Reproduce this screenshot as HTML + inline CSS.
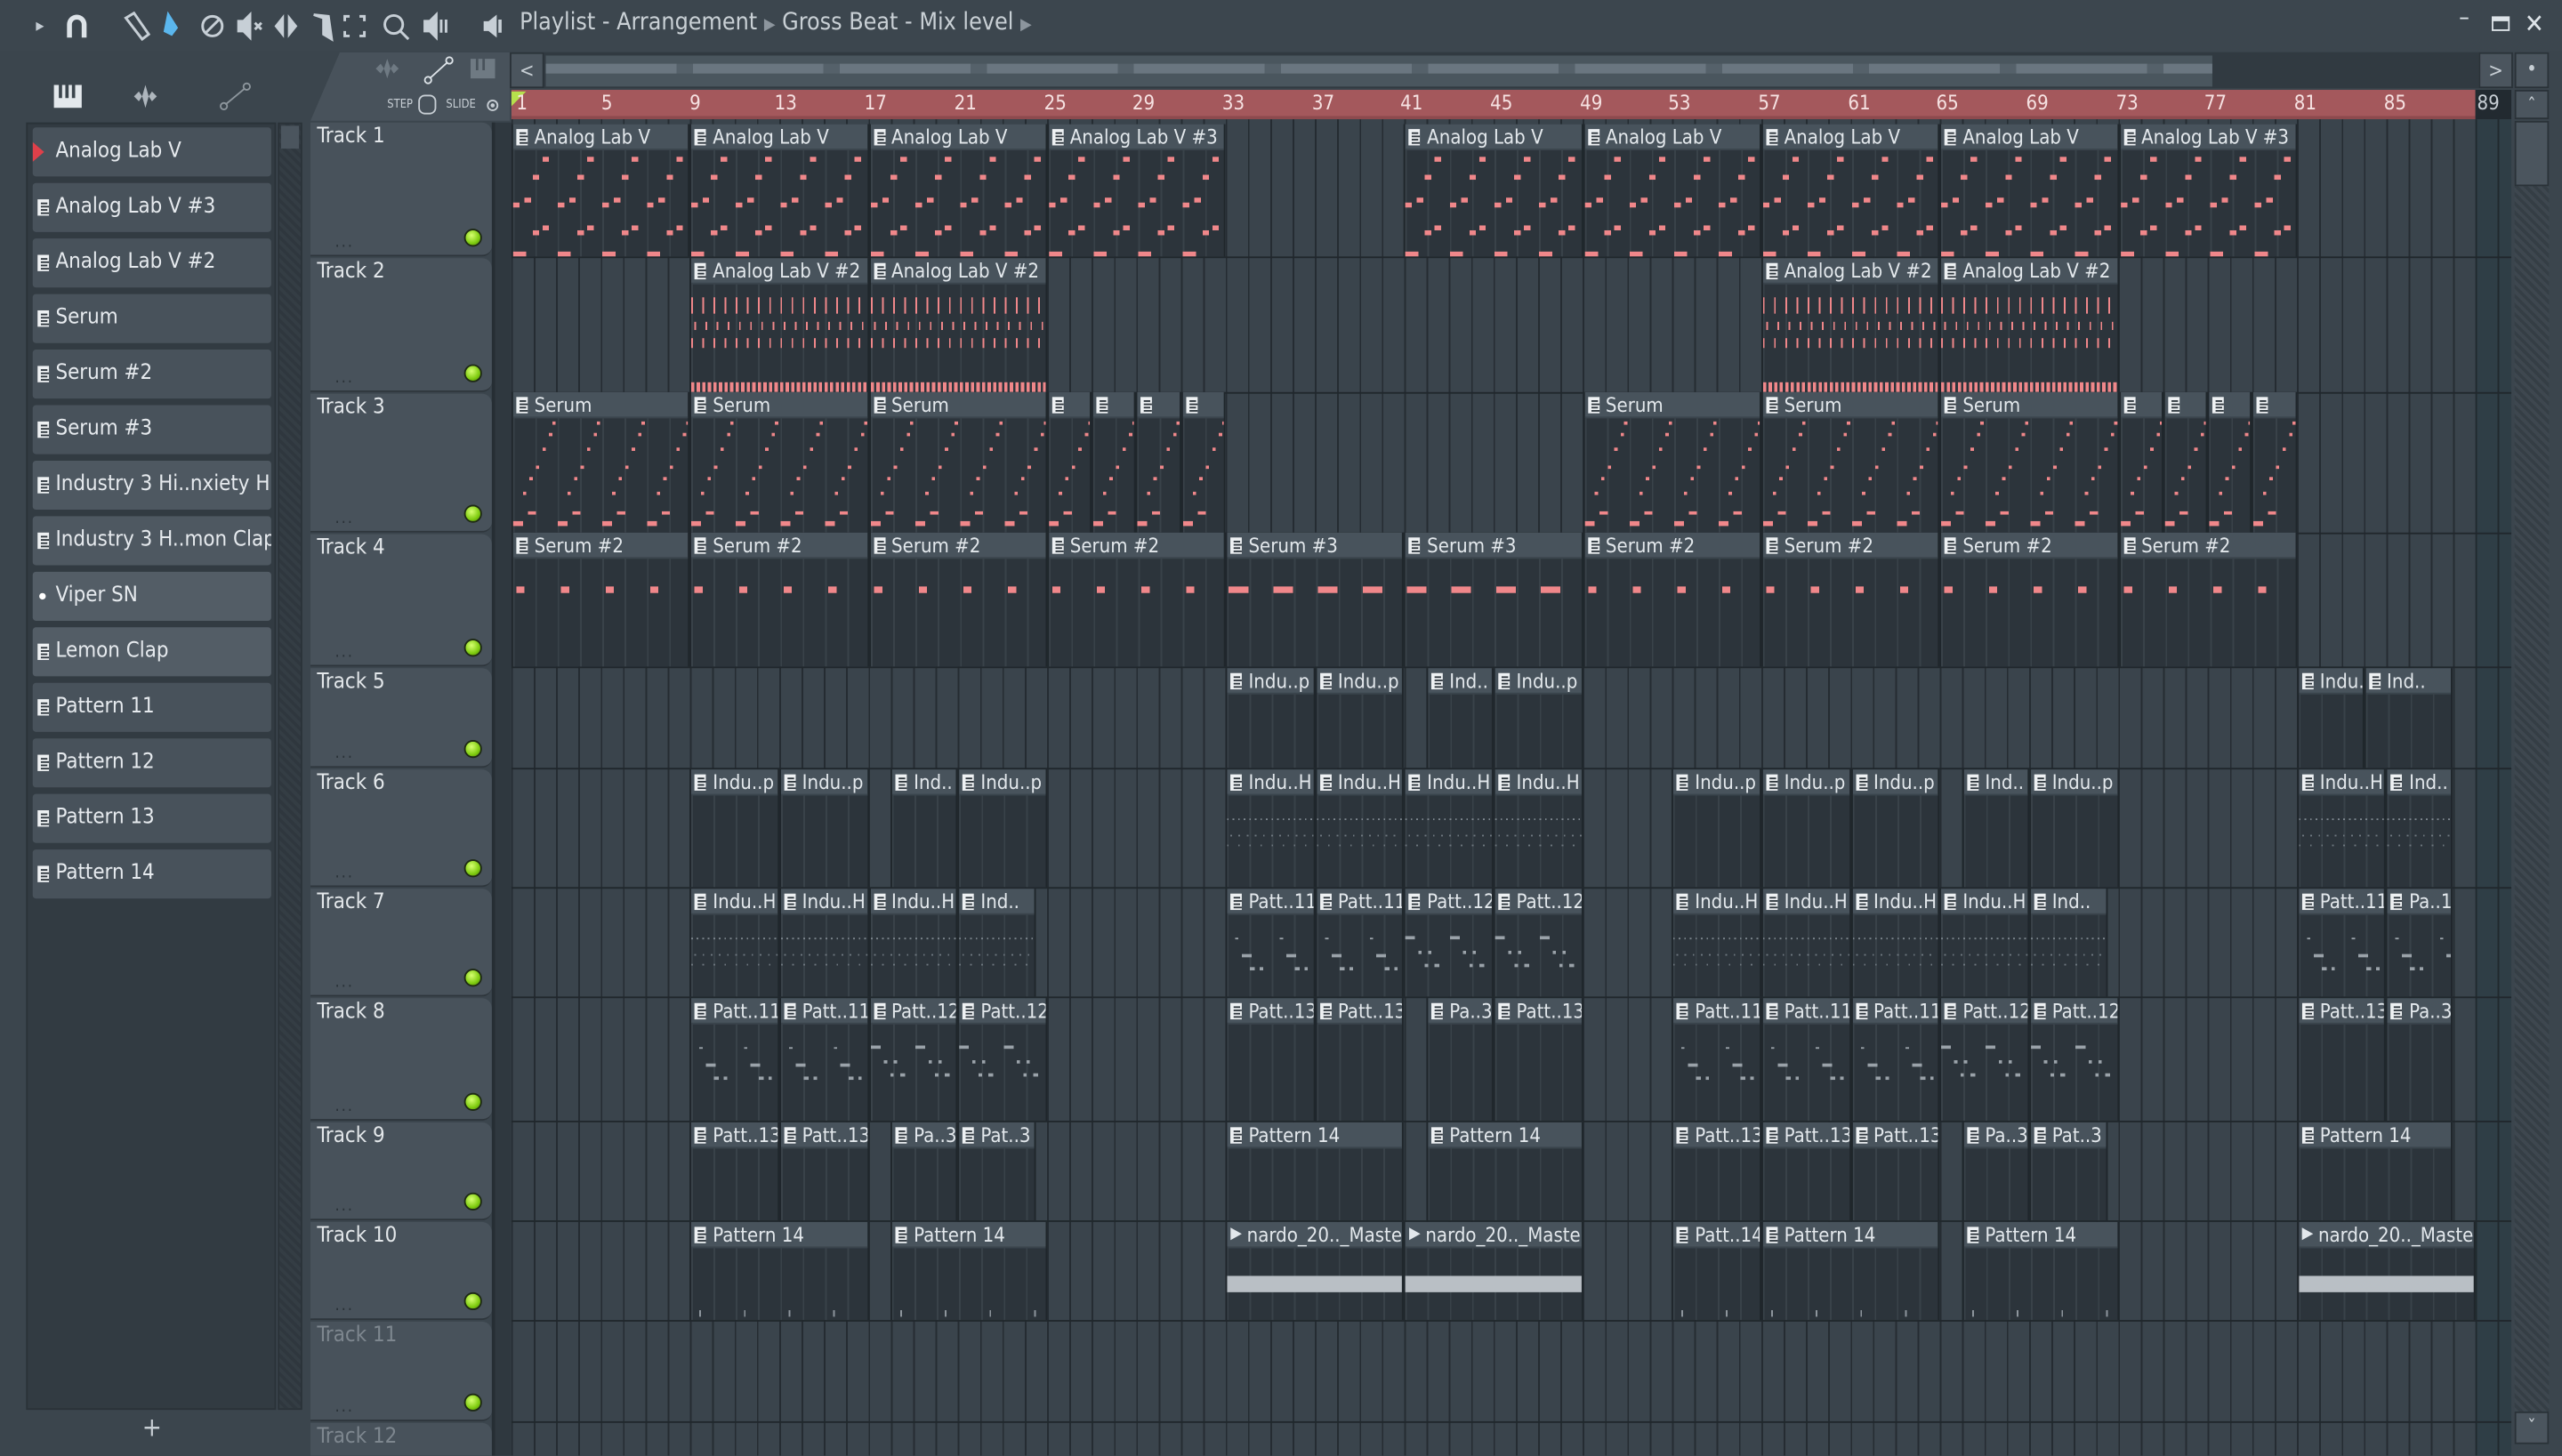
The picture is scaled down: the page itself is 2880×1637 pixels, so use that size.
<!DOCTYPE html>
<html><head><meta charset="utf-8">
<style>
*{margin:0;padding:0;box-sizing:border-box}
html,body{width:2880px;height:1636px;overflow:hidden;background:#3b454d}
#s{position:absolute;left:0;top:0;width:1568px;height:891px;transform:scale(1.83673);transform-origin:0 0;background:#3b454d;font-family:"DejaVu Sans Condensed","DejaVu Sans","Liberation Sans Narrow",sans-serif;font-stretch:condensed;color:#dde3e8;overflow:hidden}
.a{position:absolute}
.top{left:0;top:0;width:1568px;height:31px;background:#3c464e}
.title{left:318px;top:6px;font-size:14.5px;color:#c9d0d5;white-space:nowrap}
.panel{left:16px;top:75px;width:153px;height:788px;background:#323b42;border:1px solid #2a3238}
.item{position:absolute;left:3px;width:146px;height:30px;background:#48525b;border-radius:2px;font-size:13px;line-height:30px;padding-left:14px;white-space:nowrap;overflow:hidden;color:#e6eaee}
.item i,.clip .h i{position:absolute;left:3px;top:10px;width:7px;height:10px;background:linear-gradient(#2d353c 0 0) 2px 2px/4px 1px no-repeat,linear-gradient(#2d353c 0 0) 2px 4px/5px 1px no-repeat,linear-gradient(#2d353c 0 0) 2px 6px/4px 1px no-repeat,linear-gradient(#2d353c 0 0) 2px 8px/5px 1px no-repeat,#eef1f3}
.sb{left:170px;top:75px;width:15px;height:788px;background:repeating-linear-gradient(45deg,#343d44 0 2px,#2f373e 2px 4px);border:1px solid #2a3238}
.hdr{position:absolute;left:190px;width:111px;background:#48525b;border-radius:0 6px 6px 0;border-bottom:1px solid #2e363c}
.hdr b{position:absolute;left:4px;top:1px;font-weight:normal;font-size:13px;color:#e3e7ea}
.hdr .led{position:absolute;right:6px;bottom:5px;width:11px;height:11px;border-radius:50%;background:radial-gradient(circle at 40% 35%,#d6ff70,#7fcc10 60%,#4c7d08);border:1px solid #1e2a14}
.hdr .dt{position:absolute;left:15px;bottom:2px;font-size:10px;color:#2a3238;letter-spacing:1px}
.grid{left:313px;top:73px;width:1202px;height:818px;background:repeating-linear-gradient(90deg,#252c32 0 1px,#3a444c 1px 13.66px)}
.grid2{left:1515px;top:73px;width:22px;height:818px;background:repeating-linear-gradient(90deg,#20292e 0 1px,#2f3e46 1px 13.66px)}
.rsep{position:absolute;left:313px;width:1224px;height:1px;background:#20272c}
.ruler{left:313px;top:55px;width:1202px;height:18px;background:#a4585c;border-bottom:2px solid #8d4a4e}
.ruler span{position:absolute;top:1px;font-size:12px;color:#f6e2e2}
.clip{position:absolute;left:calc(313px + (var(--b) - 1) * 13.66px);width:calc(var(--w) * 13.66px);background:#2c343b;border-left:1px solid #1f262b;border-right:1px solid #1f262b;overflow:hidden}
.clip .h{position:absolute;left:0;top:0;right:0;height:16px;background:#48535c;border-bottom:1px solid #3a444c;font-size:12px;line-height:16px;padding-left:13px;white-space:nowrap;overflow:hidden;color:#e3e8ec}
.clip .h i{top:3px;left:2px}
.clip .bd{position:absolute;left:0;right:0;top:16px;bottom:0;background:repeating-linear-gradient(90deg,#394249 0 1px,transparent 1px 13.66px)}
.clip .bd.p1{background:
repeating-linear-gradient(90deg,transparent 0 18px,#f0878a 18px 22px,transparent 22px 27.32px) 0 4px/100% 3px no-repeat,
repeating-linear-gradient(90deg,transparent 0 12px,#f0878a 12px 16px,transparent 16px 27.32px) 0 15px/100% 3px no-repeat,
repeating-linear-gradient(90deg,transparent 0 7px,#f0878a 7px 11px,transparent 11px 27.32px) 0 29px/100% 3px no-repeat,
repeating-linear-gradient(90deg,#f0878a 0 4px,transparent 4px 27.32px) 0 32px/100% 3px no-repeat,
repeating-linear-gradient(90deg,transparent 0 18px,#f0878a 18px 22px,transparent 22px 27.32px) 0 46px/100% 3px no-repeat,
repeating-linear-gradient(90deg,transparent 0 12px,#f0878a 12px 16px,transparent 16px 27.32px) 0 49px/100% 3px no-repeat,
repeating-linear-gradient(90deg,#f0878a 0 8px,transparent 8px 27.32px) 0 62px/100% 3px no-repeat,
repeating-linear-gradient(90deg,#394249 0 1px,transparent 1px 13.66px)}
.clip .bd.p2{background:
repeating-linear-gradient(90deg,#f0878a 0 1px,transparent 1px 6.83px) 0 8px/100% 10px no-repeat,
repeating-linear-gradient(90deg,transparent 0 2px,#f0878a 2px 3px,transparent 3px 6.83px) 0 23px/100% 5px no-repeat,
repeating-linear-gradient(90deg,#f0878a 0 1px,transparent 1px 6.83px) 0 33px/100% 6px no-repeat,
repeating-linear-gradient(90deg,#f0878a 0 2px,transparent 2px 3.4px) 0 60px/100% 6px no-repeat,
repeating-linear-gradient(90deg,#394249 0 1px,transparent 1px 13.66px)}
.clip .bd.p3{background:
repeating-linear-gradient(90deg,transparent 0 24px,#f0878a 24px 26px,transparent 26px 27.32px) 0 2px/100% 2px no-repeat,
repeating-linear-gradient(90deg,transparent 0 22px,#f0878a 22px 24px,transparent 24px 27.32px) 0 9px/100% 2px no-repeat,
repeating-linear-gradient(90deg,transparent 0 18px,#f0878a 18px 20px,transparent 20px 27.32px) 0 18px/100% 2px no-repeat,
repeating-linear-gradient(90deg,transparent 0 14px,#f0878a 14px 16px,transparent 16px 27.32px) 0 29px/100% 2px no-repeat,
repeating-linear-gradient(90deg,transparent 0 10px,#f0878a 10px 12px,transparent 12px 27.32px) 0 36px/100% 2px no-repeat,
repeating-linear-gradient(90deg,transparent 0 6px,#f0878a 6px 8px,transparent 8px 27.32px) 0 45px/100% 2px no-repeat,
repeating-linear-gradient(90deg,transparent 0 9px,#f0878a 9px 14px,transparent 14px 27.32px) 0 57px/100% 2px no-repeat,
repeating-linear-gradient(90deg,#f0878a 0 6px,transparent 6px 27.32px) 0 63px/100% 3px no-repeat,
repeating-linear-gradient(90deg,#394249 0 1px,transparent 1px 13.66px)}
.clip .bd.p4{background:repeating-linear-gradient(90deg,transparent 0 2px,#f0878a 2px 7px,transparent 7px 27.32px) 0 17px/100% 4px no-repeat,repeating-linear-gradient(90deg,#394249 0 1px,transparent 1px 13.66px)}
.clip .bd.p4b{background:repeating-linear-gradient(90deg,transparent 0 1px,#f0878a 1px 13px,transparent 13px 27.32px) 0 17px/100% 4px no-repeat,repeating-linear-gradient(90deg,#394249 0 1px,transparent 1px 13.66px)}
.clip .bd.g1{background:
repeating-linear-gradient(90deg,#7d868e 0 1px,transparent 1px 3.4px) 0 14px/100% 1px no-repeat,
repeating-linear-gradient(90deg,transparent 0 2px,#6e777f 2px 3px,transparent 3px 5px) 0 24px/100% 1px no-repeat,
repeating-linear-gradient(90deg,#6e777f 0 1px,transparent 1px 6.8px) 0 30px/100% 1px no-repeat,
repeating-linear-gradient(90deg,#394249 0 1px,transparent 1px 13.66px)}
.clip .bd.g2{background:
repeating-linear-gradient(90deg,transparent 0 5px,#9aa2a9 5px 7px,transparent 7px 27.32px) 0 14px/100% 1px no-repeat,
repeating-linear-gradient(90deg,transparent 0 9px,#9aa2a9 9px 15px,transparent 15px 27.32px) 0 24px/100% 2px no-repeat,
repeating-linear-gradient(90deg,transparent 0 14px,#9aa2a9 14px 17px,transparent 17px 20px,#9aa2a9 20px 22px,transparent 22px 27.32px) 0 32px/100% 2px no-repeat,
repeating-linear-gradient(90deg,#394249 0 1px,transparent 1px 13.66px)}
.clip .bd.g3{background:
repeating-linear-gradient(90deg,#9aa2a9 0 6px,transparent 6px 27.32px) 0 13px/100% 2px no-repeat,
repeating-linear-gradient(90deg,transparent 0 8px,#9aa2a9 8px 10px,transparent 10px 14px,#9aa2a9 14px 16px,transparent 16px 27.32px) 0 22px/100% 2px no-repeat,
repeating-linear-gradient(90deg,transparent 0 12px,#9aa2a9 12px 14px,transparent 14px 18px,#9aa2a9 18px 21px,transparent 21px 27.32px) 0 30px/100% 2px no-repeat,
repeating-linear-gradient(90deg,#394249 0 1px,transparent 1px 13.66px)}
.clip .bd.g4{background:repeating-linear-gradient(90deg,transparent 0 5px,#8d959c 5px 6px,transparent 6px 27.32px) 0 38px/100% 4px no-repeat,repeating-linear-gradient(90deg,#394249 0 1px,transparent 1px 13.66px)}
.clip .bd.wav{background:linear-gradient(#b9bfc5,#b9bfc5) 0 17px/100% 10px no-repeat,repeating-linear-gradient(90deg,#394249 0 1px,transparent 1px 13.66px)}
.btn{position:absolute;background:#4b555e;border:1px solid #2a3238;color:#c7ced4;font-size:12px;text-align:center}
</style></head><body><div id="s">
<div class="a top"></div>
<div class="a" style="left:22px;top:9px;font-size:11px;color:#c3cbd2">&#9656;</div>
<svg class="a" style="left:38px;top:7px" width="18" height="17" viewBox="0 0 18 17"><path d="M3 16V8a6 6 0 0 1 12 0v8h-3V8a3 3 0 0 0-6 0v8z" fill="#dde3e8"/></svg>
<svg class="a" style="left:74px;top:6px" width="210" height="20" viewBox="0 0 210 20" fill="none" stroke="#c7cfd6" stroke-width="1.6">
<path d="M3 5l5-3 9 13-4 3z"/><path d="M29 3l5 8-3 4-4-2z" stroke="#5bb7ee" fill="#5bb7ee"/><circle cx="56" cy="10" r="6"/><path d="M52 14l8-8"/>
<path d="M72 7h3l4-4v14l-4-4h-3z" fill="#c7cfd6"/><path d="M82 8l4 4m0-4l-4 4"/><path d="M95 10l4-5v10zm12 0l-4-5v10z" fill="#c7cfd6"/>
<path d="M118 3l6 2v10l5 3-2-14z" fill="#c7cfd6"/><path d="M140 4h-3v3m0 6v3h3m6 0h3v-3m0-6V4h-3"/><circle cx="167" cy="9" r="5.5"/><path d="M171 13l5 5"/>
<path d="M186 7h3l4-4v14l-4-4h-3z" fill="#c7cfd6"/><path d="M196 6v8m3-8v8"/></svg>
<svg class="a" style="left:294px;top:7px" width="18" height="18" viewBox="0 0 18 18"><path d="M2 6h3l5-4v14l-5-4H2z" fill="#c7cfd6"/><path d="M12 5v8" stroke="#c7cfd6" stroke-width="2"/></svg>
<div class="a title">Playlist - Arrangement <span style="color:#8c959d;font-size:10px">&#9654;</span> Gross Beat - Mix level <span style="color:#8c959d;font-size:10px">&#9654;</span></div>
<div class="a" style="left:1505px;top:3px;font-size:14px;color:#dde3e8">&#8211;</div>
<div class="a" style="left:1525px;top:10px;width:11px;height:9px;border:1.5px solid #dde3e8;border-top-width:3px"></div>
<div class="a" style="left:1545px;top:5px;font-size:16px;color:#dde3e8">&#10005;</div>

<svg class="a" style="left:30px;top:49px" width="140" height="20" viewBox="0 0 140 20"><rect x="3" y="3" width="17" height="14" fill="#e3e8ec"/><path d="M7 3v8m4-8v8m4-8v8" stroke="#3b454d" stroke-width="2"/><path d="M52 10l3-3 2 3 2-7 2 7 2-3 3 3-3 3-2-3-2 7-2-7-2 3z" fill="#aeb6bd"/><circle cx="107" cy="16" r="2" fill="none" stroke="#8d969d"/><circle cx="121" cy="4" r="2" fill="none" stroke="#8d969d"/><path d="M108 15l12-10" stroke="#8d969d"/></svg>
<div class="a panel">
<div class="item" style="top:2px"><span style="position:absolute;left:0;top:9px;border-left:7px solid #e0404a;border-top:6px solid transparent;border-bottom:6px solid transparent"></span>Analog Lab V</div>
<div class="item" style="top:36px"><i></i>Analog Lab V #3</div>
<div class="item" style="top:70px"><i></i>Analog Lab V #2</div>
<div class="item" style="top:104px"><i></i>Serum</div>
<div class="item" style="top:138px"><i></i>Serum #2</div>
<div class="item" style="top:172px"><i></i>Serum #3</div>
<div class="item" style="top:206px;background:#4e5861"><i></i>Industry 3 Hi..nxiety HH</div>
<div class="item" style="top:240px;background:#4e5861"><i></i>Industry 3 H..mon Clap</div>
<div class="item" style="top:274px;background:#535d66"><span style="position:absolute;left:4px;top:13px;width:4px;height:4px;border-radius:50%;background:#fff"></span>Viper SN</div>
<div class="item" style="top:308px;background:#535d66"><i></i>Lemon Clap</div>
<div class="item" style="top:342px"><i></i>Pattern 11</div>
<div class="item" style="top:376px"><i></i>Pattern 12</div>
<div class="item" style="top:410px"><i></i>Pattern 13</div>
<div class="item" style="top:444px"><i></i>Pattern 14</div>
</div>
<div class="a sb"><div style="position:absolute;left:1px;top:1px;width:11px;height:14px;background:#4b555e"></div></div>
<div class="a" style="left:87px;top:864px;font-size:16px;color:#c7ced4">+</div>

<div class="a" style="left:190px;top:32px;width:122px;height:42px;background:#48525b;clip-path:polygon(18px 0,100% 0,100% 100%,0 100%)"></div>
<svg class="a" style="left:228px;top:34px" width="80" height="18" viewBox="0 0 80 18"><path d="M2 8l3-3 2 3 2-6 2 6 2-3 3 3-3 3-2-3-2 6-2-6-2 3z" fill="#6f7a83"/><circle cx="34" cy="15" r="2" fill="none" stroke="#dde3e8"/><circle cx="47" cy="3" r="2" fill="none" stroke="#dde3e8"/><path d="M35 14l11-10" stroke="#dde3e8"/><rect x="60" y="2" width="15" height="12" fill="#6f7a83"/><path d="M64 2v7m4-7v7" stroke="#48525b" stroke-width="1.5"/></svg>
<div class="a" style="left:237px;top:60px;font-size:7px;color:#c7ced4">STEP</div>
<div class="a" style="left:256px;top:58px;width:11px;height:12px;border:1px solid #c7ced4;border-radius:4px"></div>
<div class="a" style="left:273px;top:60px;font-size:7px;color:#c7ced4">SLIDE</div>
<div class="a" style="left:298px;top:61px;width:7px;height:7px;border-radius:50%;border:1px solid #c7ced4;background:radial-gradient(#c7ced4 30%,transparent 40%)"></div>
<div class="btn" style="left:312px;top:32px;width:21px;height:22px;line-height:20px">&lt;</div>
<div class="a" style="left:333px;top:32px;width:1184px;height:22px;background:#313a41"></div>
<div class="a" style="left:334px;top:34px;width:1020px;height:19px;background:#4a565e"></div>
<div class="a" style="left:334px;top:39px;width:1020px;height:6px;background:repeating-linear-gradient(90deg,#6a7680 0 80px,#55616a 80px 90px)"></div>
<div class="btn" style="left:1517px;top:32px;width:21px;height:22px;line-height:20px">&gt;</div>
<div class="btn" style="left:1539px;top:32px;width:21px;height:22px;line-height:18px">&#8226;</div>

<div class="a ruler">
<div class="a" style="left:0;top:1px;border-left:9px solid #b6e04c;border-bottom:9px solid transparent"></div>
<span style="left:3px">1</span><span style="left:55px">5</span><span style="left:109px">9</span><span style="left:161px">13</span><span style="left:216px">17</span><span style="left:271px">21</span><span style="left:326px">25</span><span style="left:380px">29</span><span style="left:435px">33</span><span style="left:490px">37</span><span style="left:544px">41</span><span style="left:599px">45</span><span style="left:654px">49</span><span style="left:708px">53</span><span style="left:763px">57</span><span style="left:818px">61</span><span style="left:872px">65</span><span style="left:927px">69</span><span style="left:982px">73</span><span style="left:1036px">77</span><span style="left:1091px">81</span><span style="left:1146px">85</span></div>
<div class="a" style="left:1515px;top:55px;width:22px;height:18px;background:#222a30;font-size:12px;color:#c7ced4;padding:1px 0 0 1px">89</div>
<div class="btn" style="left:1539px;top:55px;width:21px;height:18px;line-height:18px">&#710;</div>
<div class="a" style="left:1539px;top:74px;width:21px;height:40px;background:#4b555e;border:1px solid #2a3238"></div>
<div class="a" style="left:1539px;top:114px;width:21px;height:750px;background:repeating-linear-gradient(45deg,#3e474f 0 2px,#353e45 2px 4px)"></div>
<div class="btn" style="left:1539px;top:864px;width:21px;height:20px;line-height:18px">&#711;</div>

<div class="a" style="left:301px;top:75px;width:12px;height:816px;background:#2f383f;border-left:2px solid #262e34"></div>
<div class="a grid"></div><div class="a grid2"></div>
<div class="rsep" style="top:157px"></div><div class="rsep" style="top:240px"></div><div class="rsep" style="top:326px"></div><div class="rsep" style="top:408px"></div><div class="rsep" style="top:470px"></div><div class="rsep" style="top:543px"></div><div class="rsep" style="top:610px"></div><div class="rsep" style="top:686px"></div><div class="rsep" style="top:747px"></div><div class="rsep" style="top:808px"></div><div class="rsep" style="top:870px"></div>

<div class="hdr" style="top:75px;height:82px"><b>Track 1</b><span class="dt">...</span><span class="led"></span></div>
<div class="hdr" style="top:158px;height:82px"><b>Track 2</b><span class="dt">...</span><span class="led"></span></div>
<div class="hdr" style="top:241px;height:85px"><b>Track 3</b><span class="dt">...</span><span class="led"></span></div>
<div class="hdr" style="top:327px;height:81px"><b>Track 4</b><span class="dt">...</span><span class="led"></span></div>
<div class="hdr" style="top:409px;height:61px"><b>Track 5</b><span class="dt">...</span><span class="led"></span></div>
<div class="hdr" style="top:471px;height:72px"><b>Track 6</b><span class="dt">...</span><span class="led"></span></div>
<div class="hdr" style="top:544px;height:66px"><b>Track 7</b><span class="dt">...</span><span class="led"></span></div>
<div class="hdr" style="top:611px;height:75px"><b>Track 8</b><span class="dt">...</span><span class="led"></span></div>
<div class="hdr" style="top:687px;height:60px"><b>Track 9</b><span class="dt">...</span><span class="led"></span></div>
<div class="hdr" style="top:748px;height:60px"><b>Track 10</b><span class="dt">...</span><span class="led"></span></div>
<div class="hdr" style="top:809px;height:61px"><b style="color:#7e878f">Track 11</b><span class="dt">...</span><span class="led"></span></div>
<div class="hdr" style="top:871px;height:30px"><b style="color:#7e878f">Track 12</b></div>

<!-- Track 1 -->
<div class="a" style="left:0;top:76px;width:1568px;height:81px">
<div class="clip" style="--b:1;--w:8;height:81px"><div class="h"><i></i>Analog Lab V</div><div class="bd p1"></div></div>
<div class="clip" style="--b:9;--w:8;height:81px"><div class="h"><i></i>Analog Lab V</div><div class="bd p1"></div></div>
<div class="clip" style="--b:17;--w:8;height:81px"><div class="h"><i></i>Analog Lab V</div><div class="bd p1"></div></div>
<div class="clip" style="--b:25;--w:8;height:81px"><div class="h"><i></i>Analog Lab V #3</div><div class="bd p1"></div></div>
<div class="clip" style="--b:41;--w:8;height:81px"><div class="h"><i></i>Analog Lab V</div><div class="bd p1"></div></div>
<div class="clip" style="--b:49;--w:8;height:81px"><div class="h"><i></i>Analog Lab V</div><div class="bd p1"></div></div>
<div class="clip" style="--b:57;--w:8;height:81px"><div class="h"><i></i>Analog Lab V</div><div class="bd p1"></div></div>
<div class="clip" style="--b:65;--w:8;height:81px"><div class="h"><i></i>Analog Lab V</div><div class="bd p1"></div></div>
<div class="clip" style="--b:73;--w:8;height:81px"><div class="h"><i></i>Analog Lab V #3</div><div class="bd p1"></div></div>
</div>
<!-- Track 2 -->
<div class="a" style="left:0;top:158px;width:1568px;height:82px">
<div class="clip" style="--b:9;--w:8;height:82px"><div class="h"><i></i>Analog Lab V #2</div><div class="bd p2"></div></div>
<div class="clip" style="--b:17;--w:8;height:82px"><div class="h"><i></i>Analog Lab V #2</div><div class="bd p2"></div></div>
<div class="clip" style="--b:57;--w:8;height:82px"><div class="h"><i></i>Analog Lab V #2</div><div class="bd p2"></div></div>
<div class="clip" style="--b:65;--w:8;height:82px"><div class="h"><i></i>Analog Lab V #2</div><div class="bd p2"></div></div>
</div>
<!-- Track 3 -->
<div class="a" style="left:0;top:240px;width:1568px;height:86px">
<div class="clip" style="--b:1;--w:8;height:86px"><div class="h"><i></i>Serum</div><div class="bd p3"></div></div>
<div class="clip" style="--b:9;--w:8;height:86px"><div class="h"><i></i>Serum</div><div class="bd p3"></div></div>
<div class="clip" style="--b:17;--w:8;height:86px"><div class="h"><i></i>Serum</div><div class="bd p3"></div></div>
<div class="clip" style="--b:25;--w:2;height:86px"><div class="h"><i></i></div><div class="bd p3"></div></div>
<div class="clip" style="--b:27;--w:2;height:86px"><div class="h"><i></i></div><div class="bd p3"></div></div>
<div class="clip" style="--b:29;--w:2;height:86px"><div class="h"><i></i></div><div class="bd p3"></div></div>
<div class="clip" style="--b:31;--w:2;height:86px"><div class="h"><i></i></div><div class="bd p3"></div></div>
<div class="clip" style="--b:49;--w:8;height:86px"><div class="h"><i></i>Serum</div><div class="bd p3"></div></div>
<div class="clip" style="--b:57;--w:8;height:86px"><div class="h"><i></i>Serum</div><div class="bd p3"></div></div>
<div class="clip" style="--b:65;--w:8;height:86px"><div class="h"><i></i>Serum</div><div class="bd p3"></div></div>
<div class="clip" style="--b:73;--w:2;height:86px"><div class="h"><i></i></div><div class="bd p3"></div></div>
<div class="clip" style="--b:75;--w:2;height:86px"><div class="h"><i></i></div><div class="bd p3"></div></div>
<div class="clip" style="--b:77;--w:2;height:86px"><div class="h"><i></i></div><div class="bd p3"></div></div>
<div class="clip" style="--b:79;--w:2;height:86px"><div class="h"><i></i></div><div class="bd p3"></div></div>
</div>
<!-- Track 4 -->
<div class="a" style="left:0;top:326px;width:1568px;height:82px">
<div class="clip" style="--b:1;--w:8;height:82px"><div class="h"><i></i>Serum #2</div><div class="bd p4"></div></div>
<div class="clip" style="--b:9;--w:8;height:82px"><div class="h"><i></i>Serum #2</div><div class="bd p4"></div></div>
<div class="clip" style="--b:17;--w:8;height:82px"><div class="h"><i></i>Serum #2</div><div class="bd p4"></div></div>
<div class="clip" style="--b:25;--w:8;height:82px"><div class="h"><i></i>Serum #2</div><div class="bd p4"></div></div>
<div class="clip" style="--b:33;--w:8;height:82px"><div class="h"><i></i>Serum #3</div><div class="bd p4b"></div></div>
<div class="clip" style="--b:41;--w:8;height:82px"><div class="h"><i></i>Serum #3</div><div class="bd p4b"></div></div>
<div class="clip" style="--b:49;--w:8;height:82px"><div class="h"><i></i>Serum #2</div><div class="bd p4"></div></div>
<div class="clip" style="--b:57;--w:8;height:82px"><div class="h"><i></i>Serum #2</div><div class="bd p4"></div></div>
<div class="clip" style="--b:65;--w:8;height:82px"><div class="h"><i></i>Serum #2</div><div class="bd p4"></div></div>
<div class="clip" style="--b:73;--w:8;height:82px"><div class="h"><i></i>Serum #2</div><div class="bd p4"></div></div>
</div>
<!-- Track 5 -->
<div class="a" style="left:0;top:409px;width:1568px;height:61px">
<div class="clip" style="--b:33;--w:4;height:61px"><div class="h"><i></i>Indu..p</div><div class="bd"></div></div>
<div class="clip" style="--b:37;--w:4;height:61px"><div class="h"><i></i>Indu..p</div><div class="bd"></div></div>
<div class="clip" style="--b:42;--w:3;height:61px"><div class="h"><i></i>Ind..</div><div class="bd"></div></div>
<div class="clip" style="--b:45;--w:4;height:61px"><div class="h"><i></i>Indu..p</div><div class="bd"></div></div>
<div class="clip" style="--b:81;--w:3;height:61px"><div class="h"><i></i>Indu..p</div><div class="bd"></div></div>
<div class="clip" style="--b:84;--w:4;height:61px"><div class="h"><i></i>Ind..</div><div class="bd"></div></div>
</div>
<!-- Track 6 -->
<div class="a" style="left:0;top:471px;width:1568px;height:72px">
<div class="clip" style="--b:9;--w:4;height:72px"><div class="h"><i></i>Indu..p</div><div class="bd"></div></div>
<div class="clip" style="--b:13;--w:4;height:72px"><div class="h"><i></i>Indu..p</div><div class="bd"></div></div>
<div class="clip" style="--b:18;--w:3;height:72px"><div class="h"><i></i>Ind..</div><div class="bd"></div></div>
<div class="clip" style="--b:21;--w:4;height:72px"><div class="h"><i></i>Indu..p</div><div class="bd"></div></div>
<div class="clip" style="--b:33;--w:4;height:72px"><div class="h"><i></i>Indu..H</div><div class="bd g1"></div></div>
<div class="clip" style="--b:37;--w:4;height:72px"><div class="h"><i></i>Indu..H</div><div class="bd g1"></div></div>
<div class="clip" style="--b:41;--w:4;height:72px"><div class="h"><i></i>Indu..H</div><div class="bd g1"></div></div>
<div class="clip" style="--b:45;--w:4;height:72px"><div class="h"><i></i>Indu..H</div><div class="bd g1"></div></div>
<div class="clip" style="--b:53;--w:4;height:72px"><div class="h"><i></i>Indu..p</div><div class="bd"></div></div>
<div class="clip" style="--b:57;--w:4;height:72px"><div class="h"><i></i>Indu..p</div><div class="bd"></div></div>
<div class="clip" style="--b:61;--w:4;height:72px"><div class="h"><i></i>Indu..p</div><div class="bd"></div></div>
<div class="clip" style="--b:66;--w:3;height:72px"><div class="h"><i></i>Ind..</div><div class="bd"></div></div>
<div class="clip" style="--b:69;--w:4;height:72px"><div class="h"><i></i>Indu..p</div><div class="bd"></div></div>
<div class="clip" style="--b:81;--w:4;height:72px"><div class="h"><i></i>Indu..H</div><div class="bd g1"></div></div>
<div class="clip" style="--b:85;--w:3;height:72px"><div class="h"><i></i>Ind..</div><div class="bd g1"></div></div>
</div>
<!-- Track 7 -->
<div class="a" style="left:0;top:544px;width:1568px;height:66px">
<div class="clip" style="--b:9;--w:4;height:66px"><div class="h"><i></i>Indu..H</div><div class="bd g1"></div></div>
<div class="clip" style="--b:13;--w:4;height:66px"><div class="h"><i></i>Indu..H</div><div class="bd g1"></div></div>
<div class="clip" style="--b:17;--w:4;height:66px"><div class="h"><i></i>Indu..H</div><div class="bd g1"></div></div>
<div class="clip" style="--b:21;--w:3.5;height:66px"><div class="h"><i></i>Ind..</div><div class="bd g1"></div></div>
<div class="clip" style="--b:33;--w:4;height:66px"><div class="h"><i></i>Patt..11</div><div class="bd g2"></div></div>
<div class="clip" style="--b:37;--w:4;height:66px"><div class="h"><i></i>Patt..11</div><div class="bd g2"></div></div>
<div class="clip" style="--b:41;--w:4;height:66px"><div class="h"><i></i>Patt..12</div><div class="bd g3"></div></div>
<div class="clip" style="--b:45;--w:4;height:66px"><div class="h"><i></i>Patt..12</div><div class="bd g3"></div></div>
<div class="clip" style="--b:53;--w:4;height:66px"><div class="h"><i></i>Indu..H</div><div class="bd g1"></div></div>
<div class="clip" style="--b:57;--w:4;height:66px"><div class="h"><i></i>Indu..H</div><div class="bd g1"></div></div>
<div class="clip" style="--b:61;--w:4;height:66px"><div class="h"><i></i>Indu..H</div><div class="bd g1"></div></div>
<div class="clip" style="--b:65;--w:4;height:66px"><div class="h"><i></i>Indu..H</div><div class="bd g1"></div></div>
<div class="clip" style="--b:69;--w:3.5;height:66px"><div class="h"><i></i>Ind..</div><div class="bd g1"></div></div>
<div class="clip" style="--b:81;--w:4;height:66px"><div class="h"><i></i>Patt..11</div><div class="bd g2"></div></div>
<div class="clip" style="--b:85;--w:3;height:66px"><div class="h"><i></i>Pa..1</div><div class="bd g2"></div></div>
</div>
<!-- Track 8 -->
<div class="a" style="left:0;top:611px;width:1568px;height:75px">
<div class="clip" style="--b:9;--w:4;height:75px"><div class="h"><i></i>Patt..11</div><div class="bd g2"></div></div>
<div class="clip" style="--b:13;--w:4;height:75px"><div class="h"><i></i>Patt..11</div><div class="bd g2"></div></div>
<div class="clip" style="--b:17;--w:4;height:75px"><div class="h"><i></i>Patt..12</div><div class="bd g3"></div></div>
<div class="clip" style="--b:21;--w:4;height:75px"><div class="h"><i></i>Patt..12</div><div class="bd g3"></div></div>
<div class="clip" style="--b:33;--w:4;height:75px"><div class="h"><i></i>Patt..13</div><div class="bd"></div></div>
<div class="clip" style="--b:37;--w:4;height:75px"><div class="h"><i></i>Patt..13</div><div class="bd"></div></div>
<div class="clip" style="--b:42;--w:3;height:75px"><div class="h"><i></i>Pa..3</div><div class="bd"></div></div>
<div class="clip" style="--b:45;--w:4;height:75px"><div class="h"><i></i>Patt..13</div><div class="bd"></div></div>
<div class="clip" style="--b:53;--w:4;height:75px"><div class="h"><i></i>Patt..11</div><div class="bd g2"></div></div>
<div class="clip" style="--b:57;--w:4;height:75px"><div class="h"><i></i>Patt..11</div><div class="bd g2"></div></div>
<div class="clip" style="--b:61;--w:4;height:75px"><div class="h"><i></i>Patt..11</div><div class="bd g2"></div></div>
<div class="clip" style="--b:65;--w:4;height:75px"><div class="h"><i></i>Patt..12</div><div class="bd g3"></div></div>
<div class="clip" style="--b:69;--w:4;height:75px"><div class="h"><i></i>Patt..12</div><div class="bd g3"></div></div>
<div class="clip" style="--b:81;--w:4;height:75px"><div class="h"><i></i>Patt..13</div><div class="bd"></div></div>
<div class="clip" style="--b:85;--w:3;height:75px"><div class="h"><i></i>Pa..3</div><div class="bd"></div></div>
</div>
<!-- Track 9 -->
<div class="a" style="left:0;top:687px;width:1568px;height:60px">
<div class="clip" style="--b:9;--w:4;height:60px"><div class="h"><i></i>Patt..13</div><div class="bd"></div></div>
<div class="clip" style="--b:13;--w:4;height:60px"><div class="h"><i></i>Patt..13</div><div class="bd"></div></div>
<div class="clip" style="--b:18;--w:3;height:60px"><div class="h"><i></i>Pa..3</div><div class="bd"></div></div>
<div class="clip" style="--b:21;--w:3.5;height:60px"><div class="h"><i></i>Pat..3</div><div class="bd"></div></div>
<div class="clip" style="--b:33;--w:8;height:60px"><div class="h"><i></i>Pattern 14</div><div class="bd"></div></div>
<div class="clip" style="--b:42;--w:7;height:60px"><div class="h"><i></i>Pattern 14</div><div class="bd"></div></div>
<div class="clip" style="--b:53;--w:4;height:60px"><div class="h"><i></i>Patt..13</div><div class="bd"></div></div>
<div class="clip" style="--b:57;--w:4;height:60px"><div class="h"><i></i>Patt..13</div><div class="bd"></div></div>
<div class="clip" style="--b:61;--w:4;height:60px"><div class="h"><i></i>Patt..13</div><div class="bd"></div></div>
<div class="clip" style="--b:66;--w:3;height:60px"><div class="h"><i></i>Pa..3</div><div class="bd"></div></div>
<div class="clip" style="--b:69;--w:3.5;height:60px"><div class="h"><i></i>Pat..3</div><div class="bd"></div></div>
<div class="clip" style="--b:81;--w:7;height:60px"><div class="h"><i></i>Pattern 14</div><div class="bd"></div></div>
</div>
<!-- Track 10 -->
<div class="a" style="left:0;top:748px;width:1568px;height:60px">
<div class="clip" style="--b:9;--w:8;height:60px"><div class="h"><i></i>Pattern 14</div><div class="bd g4"></div></div>
<div class="clip" style="--b:18;--w:7;height:60px"><div class="h"><i></i>Pattern 14</div><div class="bd g4"></div></div>
<div class="clip" style="--b:33;--w:8;height:60px"><div class="h" style="padding-left:12px"><span style="position:absolute;left:2px;top:0;font-size:10px">&#9654;</span>nardo_20.._Master</div><div class="bd wav"></div></div>
<div class="clip" style="--b:41;--w:8;height:60px"><div class="h" style="padding-left:12px"><span style="position:absolute;left:2px;top:0;font-size:10px">&#9654;</span>nardo_20.._Master</div><div class="bd wav"></div></div>
<div class="clip" style="--b:53;--w:4;height:60px"><div class="h"><i></i>Patt..14</div><div class="bd g4"></div></div>
<div class="clip" style="--b:57;--w:8;height:60px"><div class="h"><i></i>Pattern 14</div><div class="bd g4"></div></div>
<div class="clip" style="--b:66;--w:7;height:60px"><div class="h"><i></i>Pattern 14</div><div class="bd g4"></div></div>
<div class="clip" style="--b:81;--w:8;height:60px"><div class="h" style="padding-left:12px"><span style="position:absolute;left:2px;top:0;font-size:10px">&#9654;</span>nardo_20.._Master</div><div class="bd wav"></div></div>
</div>
</div></body></html>
